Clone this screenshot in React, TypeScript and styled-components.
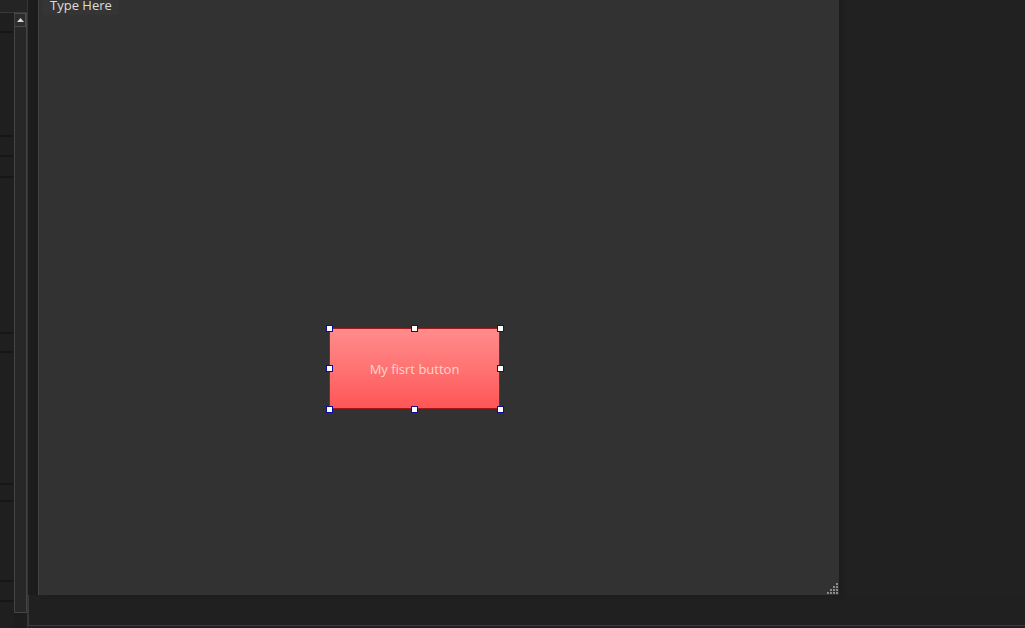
import React from 'react'
import styled, { createGlobalStyle } from 'styled-components'

const GlobalStyle = createGlobalStyle`
  html, body {
    margin: 0;
    padding: 0;
    background: #212121;
    overflow: hidden;
  }
  body {
    font-family: 'Open Sans', 'Noto Sans', sans-serif;
  }
`

const ROW_LINES = [33, 137, 157, 178, 334, 353, 485, 502, 582, 602]

export default function App(): JSX.Element {
  return (
    <>
      <GlobalStyle />
      <ScreenSCP>
        <SidePanelSCP>
          <PanelHeaderSCP />
          {ROW_LINES.map((y, i) => (
            <PanelRowSCP key={y} $height={y - (i === 0 ? 13 : ROW_LINES[i - 1])} />
          ))}
        </SidePanelSCP>

        <ScrollColumnSCP>
          <ScrollHeaderSCP />
          <ScrollBarSCP>
            <ScrollUpSCP>
              <svg width="7" height="4" viewBox="0 0 7 4">
                <path d="M0 4 L3.5 0 L7 4 Z" fill="#d8d8d8" />
              </svg>
            </ScrollUpSCP>
          </ScrollBarSCP>
        </ScrollColumnSCP>

        <WorkspaceSCP>
          <CanvasRowSCP>
            <GutterSCP />
            <FormCanvasSCP>
              <MenuBarSCP>Type Here</MenuBarSCP>
              <RedButtonSCP>
                My fisrt button
                {HANDLES.map(([x, y]) => (
                  <HandleSCP key={`${x}-${y}`} $x={x} $y={y} />
                ))}
              </RedButtonSCP>
              <GripSCP>
                <svg width="11" height="11" viewBox="0 0 11 11">
                  {GRIP_DOTS.map(([x, y]) => (
                    <rect key={`${x}-${y}`} x={x} y={y} width="2" height="2" fill="#8a8a8a" />
                  ))}
                </svg>
              </GripSCP>
            </FormCanvasSCP>
          </CanvasRowSCP>
          <BottomAreaSCP />
        </WorkspaceSCP>
      </ScreenSCP>
    </>
  )
}

// selection handles, px from the button's inner box
const HANDLES: Array<[number, number]> = [
  [-4, -4], [81, -4], [167, -4],
  [-4, 36], [167, 36],
  [-4, 77], [81, 77], [167, 77],
]

const GRIP_DOTS: Array<[number, number]> = [
  [9, 0],
  [6, 3], [9, 3],
  [3, 6], [6, 6], [9, 6],
  [0, 9], [3, 9], [6, 9], [9, 9],
]

const ScreenSCP = styled.div`
  display: flex;
  width: 1025px;
  height: 628px;
  background: #212121;
`

const SidePanelSCP = styled.div`
  width: 14px;
  flex-shrink: 0;
  background: #1f1f1f;
  display: flex;
  flex-direction: column;
`

const PanelHeaderSCP = styled.div`
  height: 12px;
  background: #242424;
  border-bottom: 1px solid #3a3a3a;
`

const PanelRowSCP = styled.div<{ $height: number }>`
  height: ${p => p.$height - 2}px;
  border-bottom: 2px solid #161616;
  margin-right: 1px;
`

const ScrollColumnSCP = styled.div`
  width: 13px;
  flex-shrink: 0;
  display: flex;
  flex-direction: column;
  background: #1d1d1d;
  border-right: 1px solid #353535;
`

const ScrollHeaderSCP = styled.div`
  height: 12px;
  background: #242424;
  border-bottom: 1px solid #3a3a3a;
`

const ScrollBarSCP = styled.div`
  height: 600px;
  background: #272727;
  border: 1px solid #444;
  border-top: none;
  box-sizing: border-box;
`

const ScrollUpSCP = styled.div`
  height: 14px;
  display: flex;
  align-items: center;
  justify-content: center;
  border: 1px solid #4a4a4a;
  border-left: none;
  background: #2c2c2c;
  box-sizing: border-box;
`

const WorkspaceSCP = styled.div`
  flex: 1;
  display: flex;
  flex-direction: column;
`

const CanvasRowSCP = styled.div`
  display: flex;
  height: 595px;
`

const GutterSCP = styled.div`
  width: 10px;
  background: #1c1c1c;
  border-right: 1px solid #454545;
`

const FormCanvasSCP = styled.div`
  position: relative;
  width: 800px;
  height: 595px;
  background: #323232;
  box-shadow: 4px 0 6px rgba(0, 0, 0, 0.15);
`

const MenuBarSCP = styled.div`
  width: fit-content;
  margin-left: 4px;
  margin-top: -5px;
  padding: 0 7px;
  height: 20px;
  line-height: 20px;
  font-size: 13px;
  color: #dcdcdc;
  background: #353535;
`

const RedButtonSCP = styled.div`
  position: absolute;
  left: 290px;
  top: 328px;
  width: 171px;
  height: 81px;
  box-sizing: border-box;
  border: 1px solid #a11a1a;
  background: linear-gradient(to bottom, #ff8c8c 0%, #ff7070 55%, #ff5656 100%);
  color: #ffd6cc;
  font-size: 13px;
  display: flex;
  align-items: center;
  justify-content: center;
`

const HandleSCP = styled.div<{ $x: number; $y: number }>`
  position: absolute;
  left: ${p => p.$x}px;
  top: ${p => p.$y}px;
  width: 7px;
  height: 7px;
  box-sizing: border-box;
  background: #ffffff;
  border: 1px solid #0c0c9a;
`

const GripSCP = styled.div`
  position: absolute;
  right: 1px;
  bottom: 1px;
  display: flex;
`

const BottomAreaSCP = styled.div`
  height: 30px;
  background: #202020;
  border-bottom: 1px solid #3c3c3c;
  border-left: 1px solid #3a3a3a;
`
